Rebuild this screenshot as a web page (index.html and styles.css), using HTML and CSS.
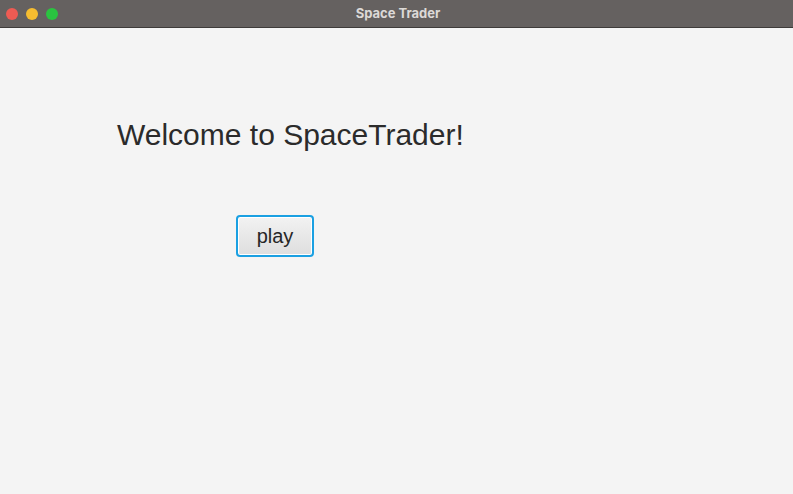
FILE: index.html
```html
<!DOCTYPE html>
<html>
<head>
<meta charset="utf-8">
<link rel="stylesheet" href="styles.css">
</head>
<body>
<div class="window">
  <div class="titlebar">
    <div class="lights">
      <span class="light red"></span>
      <span class="light yellow"></span>
      <span class="light green"></span>
    </div>
    <div class="title">Space Trader</div>
  </div>
  <div class="content">
    <h1 class="welcome">Welcome to SpaceTrader!</h1>
    <button class="play">play</button>
  </div>
</div>
</body>
</html>
```
FILE: styles.css
```css
html, body {
  margin: 0;
  padding: 0;
  width: 793px;
  height: 494px;
  overflow: hidden;
  background: #f4f4f4;
}
.window {
  width: 793px;
  height: 494px;
  display: flex;
  flex-direction: column;
  font-family: "Liberation Sans", Arial, sans-serif;
}
.titlebar {
  height: 27px;
  background: #656160;
  border-bottom: 1px solid #3e3b3a;
  display: flex;
  align-items: center;
  position: relative;
}
.lights {
  display: flex;
  gap: 8px;
  padding-left: 6px;
  padding-top: 0px;
}
.light {
  width: 12px;
  height: 12px;
  border-radius: 50%;
  display: block;
}
.red { background: #ee5b53; }
.yellow { background: #f6bd30; }
.green { background: #2ac440; }
.title {
  position: absolute;
  left: 0;
  right: 0;
  top: 0;
  height: 27px;
  line-height: 27px;
  text-align: center;
  color: #dcd9d7;
  font-weight: bold;
  font-size: 13px;
  font-family: "Inter", "Liberation Sans", sans-serif;
  padding-left: 3px;
}
.content {
  flex: 1;
  display: flex;
  flex-direction: column;
  align-items: flex-start;
  padding-left: 117px;
}
.welcome {
  margin: 89px 0 0 0;
  font-weight: normal;
  font-size: 30px;
  line-height: 36px;
  color: #2b2b2b;
}
.play {
  margin: 62px 0 0 119px;
  width: 78px;
  height: 42px;
  border: 2px solid #1aa0e2;
  border-radius: 4px;
  background: linear-gradient(#f2f2f2, #dedede);
  box-shadow: inset 0 0 0 1px #ffffff;
  font-family: "Liberation Sans", Arial, sans-serif;
  font-size: 20px;
  color: #262626;
  padding: 0;
}
```
